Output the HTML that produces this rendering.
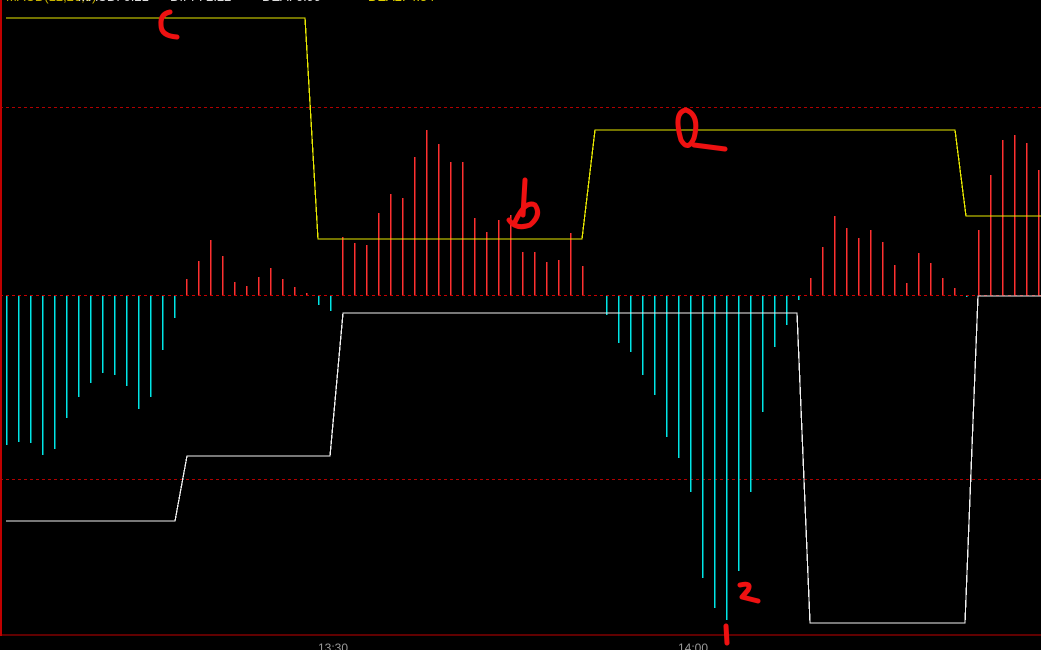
<!DOCTYPE html>
<html><head><meta charset="utf-8"><style>
html,body{margin:0;padding:0;background:#000;width:1041px;height:650px;overflow:hidden}
svg{display:block}
</style></head><body>
<svg width="1041" height="650" xmlns="http://www.w3.org/2000/svg" shape-rendering="crispEdges">
<rect width="1041" height="650" fill="#000"/>
<g font-family="Liberation Sans, sans-serif" font-size="13">
<text x="6" y="1" fill="#c8b400">MACD(12,26,9)</text>
<text x="78" y="1" fill="#ddd">MACD: 0.21</text>
<text x="170" y="1" fill="#ddd">DIFF: 2.22</text>
<text x="262" y="1" fill="#ddd">DEA: 0.99</text>
<text x="368" y="1" fill="#e0d000">DEA2: 4.54</text>
</g>
<line x1="0" y1="107.5" x2="1041" y2="107.5" stroke="#b00000" stroke-dasharray="3,3"/>
<line x1="0" y1="479.5" x2="1041" y2="479.5" stroke="#b00000" stroke-dasharray="3,3"/>
<g stroke-width="1.5">
<g stroke="#00e5e5" id="cy"></g>
<g stroke="#ff3030" id="rd"></g>
</g>
<line x1="0" y1="295.5" x2="1041" y2="295.5" stroke="#c80000" stroke-dasharray="3,3"/>
<rect x="0" y="0" width="2" height="636" fill="#c00000"/>
<rect x="0" y="634.5" width="1041" height="1.2" fill="#c00000"/>
<polyline fill="none" stroke="#e8e800" stroke-width="1.3" points="6,18 305,18 318,239 582,239 595,130 955,130 966,216 1041,216"/>
<polyline fill="none" stroke="#f0f0f0" stroke-width="1.3" points="6,521 175,521 187,456 330,456 343,313 797,313 810,623 965,623 978,296 1041,296"/>
<g font-family="Liberation Sans, sans-serif" font-size="12" fill="#999">
<text x="318" y="652">13:30</text>
<text x="678" y="652">14:00</text>
</g>
<g fill="none" stroke="#ee1111" stroke-width="5" stroke-linecap="round" stroke-linejoin="round" shape-rendering="auto">
<path d="M170,12 Q160,14 161,25 Q161,36 177,37"/>
<path d="M525,180 L523,215 M509,220 Q516,230 530,225 Q542,215 535,205 Q525,200 515,222"/>
<path d="M686,110 Q673,112 681,140 Q688,152 694,138 Q700,115 686,110 M694,145 L725,149"/>
<path d="M740,585 Q752,582 748,590 L742,597 L758,601"/>
<path d="M726,626 L727,643"/>
</g>
</svg>
<script>
var cy={6:445,18:442,30:443,42:455,54:449,66:418,78:397,90:383,102:373,114:375,126:386,138:409,150:397,162:350,174:318,318:305,330:311,606:315,618:343,630:352,642:375,654:395,666:437,678:458,690:492,702:578,714:608,726:620,738:571,750:492,762:412,774:347,786:325,798:300,966:297};
var rd={186:279,198:261,210:240,222:256,234:282,246:286,258:277,270:268,282:279,294:287,306:293,342:237,354:243,366:245,378:213,390:194,402:198,414:157,426:130,438:144,450:162,462:162,474:218,486:232,498:220,510:215,522:252,534:252,546:262,558:260,570:233,582:266,810:278,822:247,834:216,846:228,858:238,870:230,882:242,894:265,906:283,918:253,930:263,942:278,954:288,978:230,990:175,1002:140,1014:135,1026:143,1038:170};
var ns="http://www.w3.org/2000/svg";
function add(g,o){for(var k in o){var l=document.createElementNS(ns,"line");l.setAttribute("x1",+k+0.5);l.setAttribute("x2",+k+0.5);l.setAttribute("y1",296);l.setAttribute("y2",o[k]);document.getElementById(g).appendChild(l);}}
add("cy",cy);add("rd",rd);
</script>
</body></html>
